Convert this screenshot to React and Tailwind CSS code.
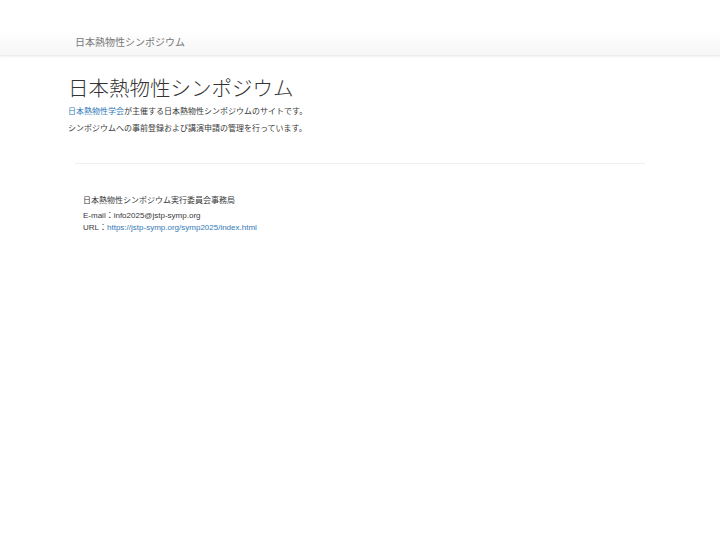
import React from "react";

const App = () => {
  return (
    <div
      className="min-h-[540px] bg-white text-[#333]"
      style={{ fontFamily: '"Liberation Sans", "Noto Sans CJK JP", sans-serif' }}
    >
      {/* ナビゲーション */}
      <div className="pt-[30px]">
        <div className="h-[26px] bg-gradient-to-b from-white to-[#f6f6f6] border-b border-[#ececec] shadow-[0_1px_2px_rgba(0,0,0,0.06)] flex items-center pl-[75px]">
          <span className="text-[10px] leading-none text-[#777]">日本熱物性シンポジウム</span>
        </div>
      </div>

      {/* メイン */}
      <div className="pl-[68px] pt-[21px]">
        <h1 className="text-[20.5px] leading-[24px] font-light text-[#333]">日本熱物性シンポジウム</h1>
        <p className="text-[8px] leading-[10px] mt-[6px] text-[#3a3a3a]">
          <a href="#" className="text-[#337ab7]">日本熱物性学会</a>
          が主催する日本熱物性シンポジウムのサイトです。
        </p>
        <p className="text-[8px] leading-[10px] mt-[7px] text-[#3a3a3a]">
          シンポジウムへの事前登録および講演申請の管理を行っています。
        </p>
      </div>

      <div className="mx-[75px] w-[570px] mt-[29px] border-t border-[#eeeeee]"></div>

      {/* フッター */}
      <div className="pl-[83px] pt-[31px] text-[8px] leading-[12px] text-[#3a3a3a]">
        <p>日本熱物性シンポジウム実行委員会事務局</p>
        <p className="mt-[3px]">E-mail：info2025@jstp-symp.org</p>
        <p>
          URL：
          <a href="#" className="text-[#337ab7]">https://jstp-symp.org/symp2025/index.html</a>
        </p>
      </div>
    </div>
  );
};

export default App;
